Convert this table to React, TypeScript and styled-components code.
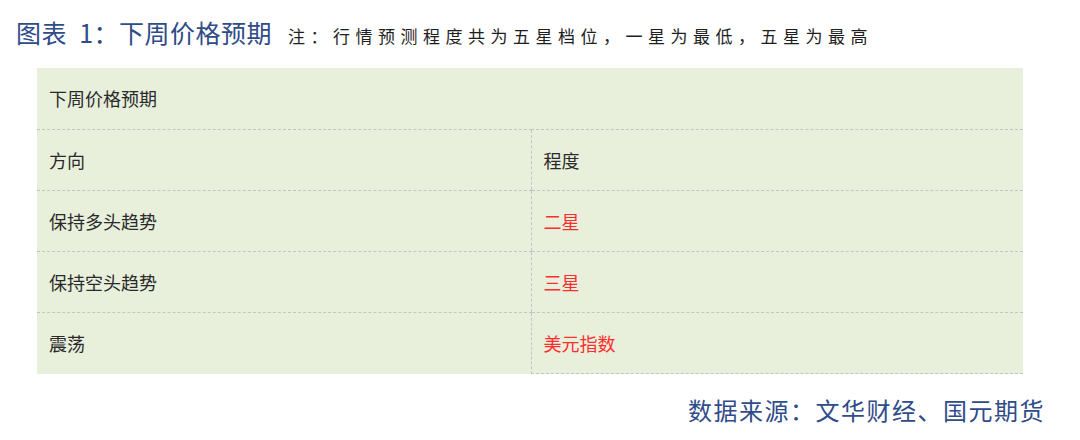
import React from "react";
import styled, { createGlobalStyle } from "styled-components";

const Global = createGlobalStyle`
  html, body { margin: 0; padding: 0; background: #ffffff; }
  body { font-family: "Noto Sans CJK SC", "Noto Sans", sans-serif; }
`;

const Page = styled.div`
  width: 1080px;
  height: 440px;
  display: flex;
  flex-direction: column;
  box-sizing: border-box;
`;

const Header = styled.div`
  display: flex;
  align-items: baseline;
  padding: 16px 0 0 16px;
  height: 68px;
  box-sizing: border-box;
`;

const Title = styled.div`
  font-size: 25px;
  line-height: 32px;
  color: #2f4c88;
  letter-spacing: 0.5px;
  white-space: pre;
`;

const Note = styled.div`
  margin-left: 16px;
  font-size: 17px;
  line-height: 32px;
  color: #1e1e1e;
  letter-spacing: 5.5px;
`;

const Table = styled.table`
  margin-left: 37px;
  width: 986px;
  border-collapse: collapse;
  background: #e8f0dc;
  table-layout: fixed;
`;

const Row = styled.tr`
  height: 61px;
`;

const Cell = styled.td<{ $red?: boolean; $right?: boolean; $noBottom?: boolean }>`
  padding: 0 0 0 12px;
  font-size: 18px;
  color: ${(p) => (p.$red ? "#ff2d2d" : "#2a2a2a")};
  border-bottom: ${(p) => (p.$noBottom ? "none" : "1px dashed #c4c4c4")};
  border-left: ${(p) => (p.$right ? "1px dashed #c4c4c4" : "none")};
  vertical-align: middle;
  line-height: 24px;
`;

const Source = styled.div`
  align-self: flex-end;
  margin: 24px 35px 0 0;
  font-size: 24px;
  line-height: 24px;
  color: #2f4c88;
  letter-spacing: 1.5px;
`;

const rows = [
  { dir: "保持多头趋势", level: "二星" },
  { dir: "保持空头趋势", level: "三星" },
  { dir: "震荡", level: "美元指数" },
];

export default function App() {
  return (
    <Page>
      <Global />
      <Header>
        <Title>{"图表  1：下周价格预期"}</Title>
        <Note>注：行情预测程度共为五星档位，一星为最低，五星为最高</Note>
      </Header>
      <Table>
        <colgroup>
          <col style={{ width: "494px" }} />
          <col />
        </colgroup>
        <tbody>
          <Row>
            <Cell colSpan={2}>下周价格预期</Cell>
          </Row>
          <Row>
            <Cell>方向</Cell>
            <Cell $right>程度</Cell>
          </Row>
          {rows.map((r, i) => (
            <Row key={r.dir}>
              <Cell $noBottom={i === rows.length - 1}>{r.dir}</Cell>
              <Cell $right $red>
                {r.level}
              </Cell>
            </Row>
          ))}
        </tbody>
      </Table>
      <Source>数据来源：文华财经、国元期货</Source>
    </Page>
  );
}
